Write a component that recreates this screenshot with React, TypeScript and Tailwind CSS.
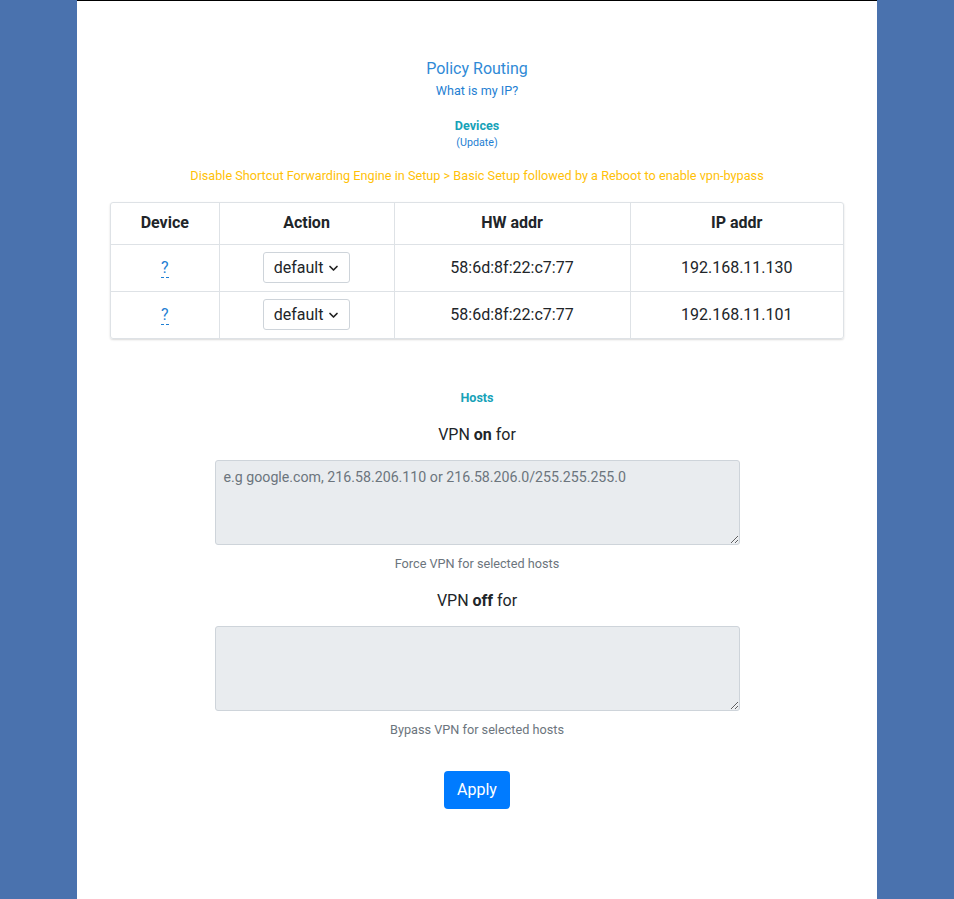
import React from "react";

function Chevron() {
  return (
    <svg width="11" height="10" viewBox="0 0 11 10" className="ml-[5px]">
      <path d="M2 3.5 L5.5 7 L9 3.5" fill="none" stroke="#222" strokeWidth="1.7" strokeLinecap="round" strokeLinejoin="round" />
    </svg>
  );
}

function Select() {
  return (
    <div className="inline-flex items-center h-[31px] w-[87px] justify-center border border-[#ced4da] rounded-[3px] bg-white text-[16px] text-[#212529]">
      default
      <Chevron />
    </div>
  );
}

const rows = [
  { hw: "58:6d:8f:22:c7:77", ip: "192.168.11.130" },
  { hw: "58:6d:8f:22:c7:77", ip: "192.168.11.101" },
];

export default function App() {
  return (
    <div
      className="min-h-[899px] w-full bg-[#4a72ae] flex justify-center"
      style={{ fontFamily: "Roboto, 'Liberation Sans', sans-serif" }}
    >
      <div className="w-[800px] min-h-[899px] bg-white border-t border-black flex flex-col items-center pt-[58px]">
        <div className="text-[16px] leading-[20px] text-[#2f8ad6]">Policy Routing</div>
        <div className="mt-[4px] text-[12.6px] leading-[16px] text-[#1f7fd3]">What is my IP?</div>
        <div className="mt-[19px] text-[12.6px] leading-[16px] font-bold text-[#17a2b8]">Devices</div>
        <div className="mt-[2px] text-[10.7px] leading-[14px] text-[#1f7fd3]">(Update)</div>
        <div className="mt-[18px] text-[12.7px] leading-[16px] text-[#ffc107]">
          Disable Shortcut Forwarding Engine in Setup &gt; Basic Setup followed by a Reboot to enable vpn-bypass
        </div>

        <div className="mt-[18px] w-[734px] border border-[#dee2e6] rounded-[3px] shadow-[0_1px_2px_rgba(0,0,0,0.15)] overflow-hidden">
          <table className="w-full border-collapse text-[16px] text-[#212529]">
            <thead>
              <tr className="h-[41px]">
                <th className="w-[108px] font-bold">Device</th>
                <th className="w-[175px] font-bold border-l border-[#dee2e6]">Action</th>
                <th className="w-[236px] font-bold border-l border-[#dee2e6]">HW addr</th>
                <th className="font-bold border-l border-[#dee2e6]">IP addr</th>
              </tr>
            </thead>
            <tbody>
              {rows.map((r, i) => (
                <tr key={i} className="h-[47px] border-t border-[#dee2e6]">
                  <td className="text-center">
                    <span className="text-[#1f7fd3] border-b border-dashed border-[#1f7fd3] leading-[18px] inline-block">?</span>
                  </td>
                  <td className="text-center border-l border-[#dee2e6]">
                    <Select />
                  </td>
                  <td className="text-center border-l border-[#dee2e6]">{r.hw}</td>
                  <td className="text-center border-l border-[#dee2e6]">{r.ip}</td>
                </tr>
              ))}
            </tbody>
          </table>
        </div>

        <div className="mt-[51px] text-[12.6px] leading-[16px] font-bold text-[#17a2b8]">Hosts</div>
        <div className="mt-[19px] text-[16px] leading-[20px] text-[#212529]">
          VPN <b>on</b> for
        </div>
        <textarea
          className="mt-[15px] w-[525px] h-[85px] bg-[#e9ecef] border border-[#ced4da] rounded-[3px] px-[8px] py-[6px] text-[14.2px] leading-[20px] text-[#495057] placeholder:text-[#6c757d] outline-none"
          placeholder="e.g google.com, 216.58.206.110 or 216.58.206.0/255.255.255.0"
          style={{ fontFamily: "Roboto, 'Liberation Sans', sans-serif" }}
        />
        <div className="mt-[11px] text-[12.7px] leading-[16px] text-[#6c757d]">Force VPN for selected hosts</div>
        <div className="mt-[19px] text-[16px] leading-[20px] text-[#212529]">
          VPN <b>off</b> for
        </div>
        <textarea
          className="mt-[15px] w-[525px] h-[85px] bg-[#e9ecef] border border-[#ced4da] rounded-[3px] px-[8px] py-[6px] text-[14px] leading-[20px] text-[#495057] outline-none"
          style={{ fontFamily: "Roboto, 'Liberation Sans', sans-serif" }}
        />
        <div className="mt-[11px] text-[12.7px] leading-[16px] text-[#6c757d]">Bypass VPN for selected hosts</div>
        <button className="mt-[33px] w-[66px] h-[38px] bg-[#007bff] rounded-[4px] text-white text-[16px]">Apply</button>
      </div>
    </div>
  );
}
